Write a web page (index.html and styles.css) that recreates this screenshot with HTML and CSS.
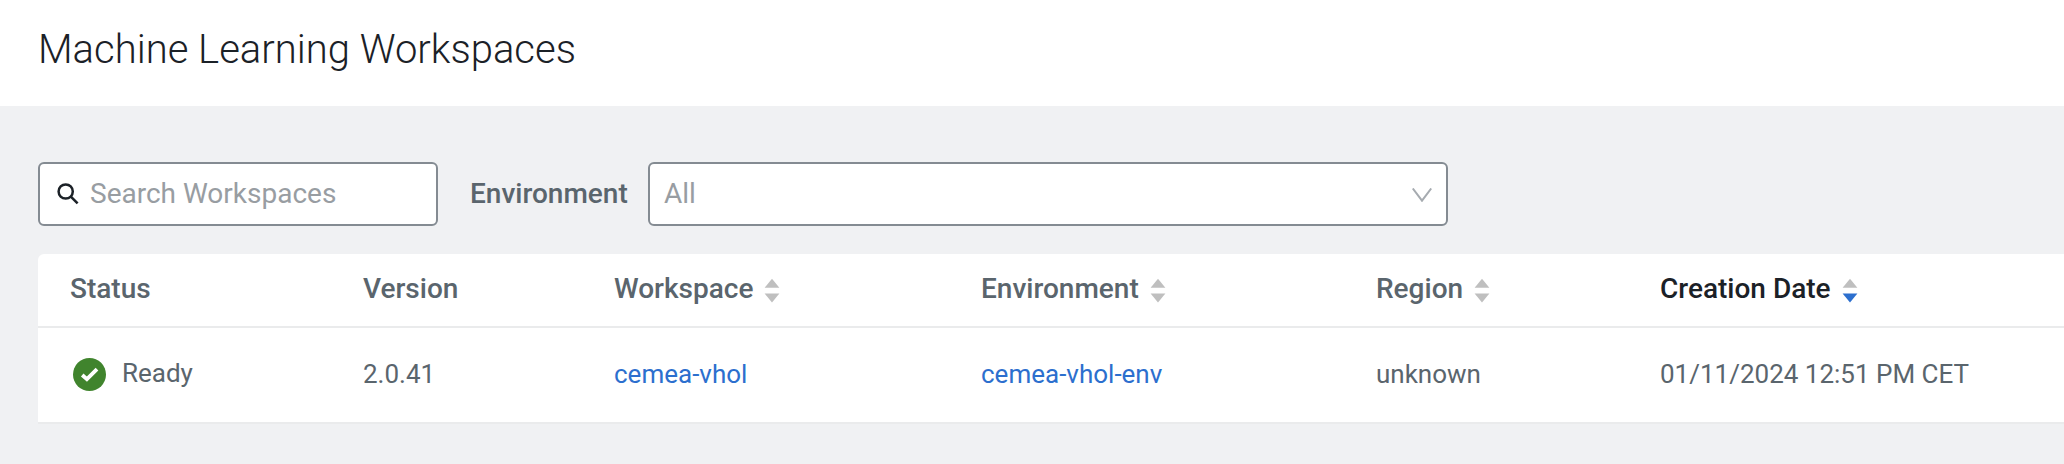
FILE: index.html
```html
<!DOCTYPE html>
<html lang="en">
<head>
<meta charset="utf-8">
<title>Machine Learning Workspaces</title>
<link rel="stylesheet" href="styles.css">
</head>
<body>
<svg class="defs" width="0" height="0" aria-hidden="true">
  <symbol id="sort" viewBox="0 0 16 26">
    <path class="up" d="M8 .7 15.4 9.7H.6z"/>
    <path class="down" d="M.6 15.4h14.8L8 24.6z"/>
  </symbol>
</svg>
<header class="page-header"><h1 class="title">Machine Learning Workspaces</h1></header>
<main class="content">
  <div class="filters">
    <div class="field search">
      <svg class="search-icon" viewBox="0 0 22 22"><circle cx="8.7" cy="8.5" r="7.1"/><path d="M13.6 13.3 20.6 20.3"/></svg>
      <span class="placeholder">Search Workspaces</span>
    </div>
    <span class="label">Environment</span>
    <div class="field select">
      <span class="placeholder">All</span>
      <svg class="chevron" viewBox="0 0 20 14"><path d="M.8.5 10 12.7 19.2.5"/></svg>
    </div>
  </div>
  <section class="table">
    <div class="row head">
      <div class="cell">Status</div>
      <div class="cell">Version</div>
      <div class="cell">Workspace<svg class="sort"><use href="#sort"/></svg></div>
      <div class="cell">Environment<svg class="sort"><use href="#sort"/></svg></div>
      <div class="cell">Region<svg class="sort"><use href="#sort"/></svg></div>
      <div class="cell active">Creation Date<svg class="sort desc"><use href="#sort"/></svg></div>
    </div>
    <div class="row body">
      <div class="cell status">
        <svg class="check" viewBox="0 0 33 33"><circle cx="16.5" cy="16.5" r="16.5"/><path d="M9.2 17 13.9 21.2 24 11.2"/></svg>
        <span class="ready">Ready</span>
      </div>
      <div class="cell">2.0.41</div>
      <div class="cell"><a class="link">cemea-vhol</a></div>
      <div class="cell"><a class="link">cemea-vhol-env</a></div>
      <div class="cell">unknown</div>
      <div class="cell">01/11/2024 12:51 PM CET</div>
    </div>
  </section>
</main>
</body>
</html>
```
FILE: styles.css
```css
* { box-sizing: border-box; }
body {
  margin: 0;
  height: 464px;
  background: #f0f1f3;
  color: #5a656d;
  font-family: Roboto, sans-serif;
  overflow: hidden;
}
.defs { display: block; }
.page-header {
  height: 106px;
  padding: 26px 38px 0;
  background: #fff;
}
.title {
  margin: 0;
  font-size: 40px;
  font-weight: 300;
  line-height: 48px;
  color: #1b2127;
}
.content { padding: 56px 0 0 38px; }
.filters {
  display: flex;
  align-items: center;
  height: 64px;
  margin-bottom: 28px;
  font-size: 28px;
  line-height: 32px;
}
.field {
  display: flex;
  align-items: center;
  height: 64px;
  border: 2px solid #848b92;
  border-radius: 6px;
  background: #fff;
}
.search { width: 400px; padding: 0 16px; }
.search-icon {
  width: 22px;
  height: 22px;
  margin: 0 11px 0 1px;
  fill: none;
  stroke: #1b2127;
  stroke-width: 2.5;
}
.placeholder { color: #989da2; }
.label { width: 178px; margin-left: 32px; font-weight: 500; }
.select { width: 800px; justify-content: space-between; padding: 0 14px; }
.chevron {
  width: 20px;
  height: 14px;
  margin-top: 2px;
  fill: none;
  stroke: #a6abb0;
  stroke-width: 2;
}
.table {
  background: #fff;
  border-radius: 6px 0 0 0;
}
.row {
  display: grid;
  grid-template-columns: 293px 251px 367px 395px 284px 1fr;
  align-items: center;
  padding: 0 0 2px 32px;
  border-bottom: 2px solid #eaebec;
}
.head { height: 74px; font-size: 28px; font-weight: 500; line-height: 32px; }
.body { height: 96px; font-size: 26px; line-height: 30px; }
.cell { display: flex; align-items: center; white-space: nowrap; }
.active { color: #1b2127; }
.sort { width: 16px; height: 26px; margin: 3px 0 0 11px; fill: #bfbfbf; }
.desc { --down: #2c6fce; }
.down { fill: var(--down, #bfbfbf); }
.check { width: 33px; height: 33px; margin: 0 16px 0 3px; }
.check circle { fill: #40842d; }
.check path { fill: none; stroke: #fff; stroke-width: 3.8; }
.ready { padding-bottom: 2px; }
.link { color: #2c6fce; }
```
